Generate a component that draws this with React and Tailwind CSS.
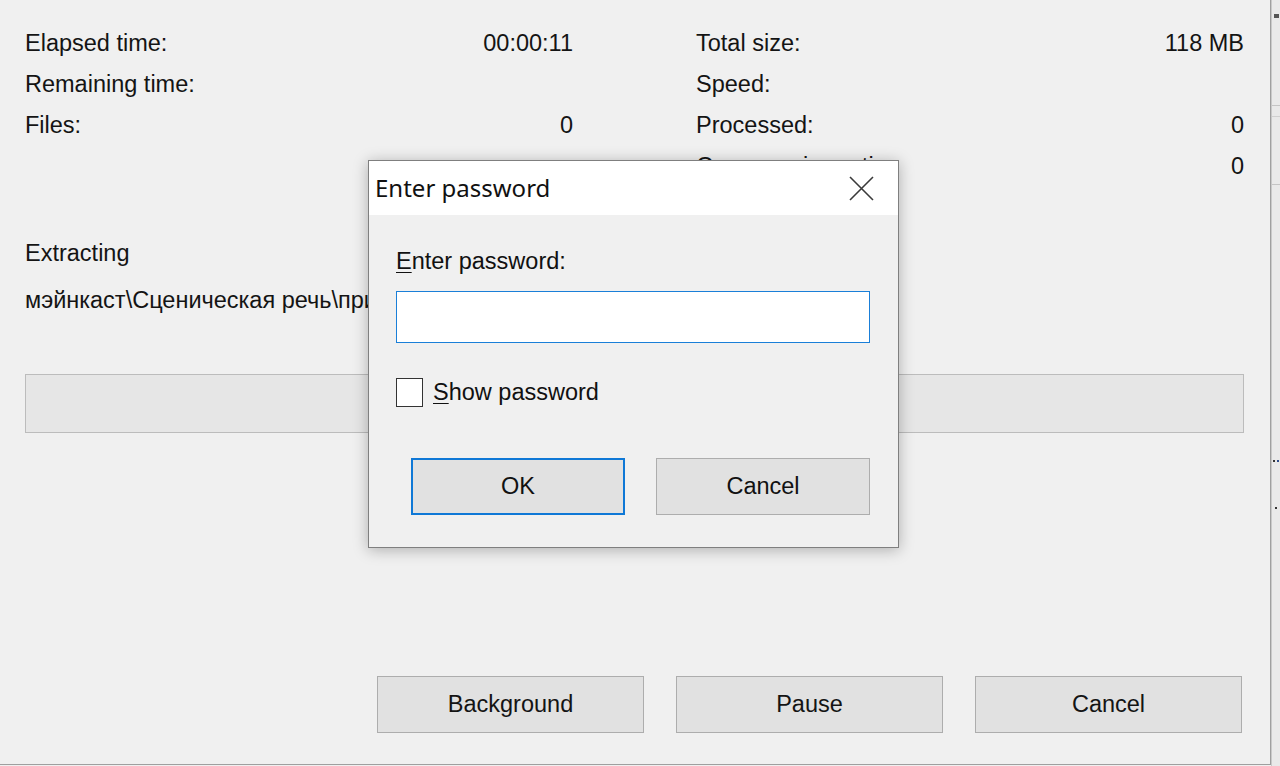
import { useState } from "react";

const font = "font-['Liberation_Sans',Arial,sans-serif]";

const rows = [
  ["Elapsed time:", "00:00:11", "Total size:", "118 MB"],
  ["Remaining time:", "", "Speed:", ""],
  ["Files:", "0", "Processed:", "0"],
  ["", "", "Compression ratio:", "0"],
];

// PASSWORD DIALOG

const PasswordDialog = () => {
  const [show, setShow] = useState(false);

  return (
    <div className="absolute left-[368px] top-[160px] w-[531px] h-[388px] border border-[#7f7f7f] bg-[#f0f0f0] shadow-[0_2px_14px_rgba(0,0,0,0.28)] flex flex-col">
      {/* TITLE */}
      <div className="h-[54px] bg-white flex items-center justify-between pl-[6px] pr-[24px]">
        <span className="font-['Noto_Sans',sans-serif] text-[24px] text-[#111] leading-none">
          Enter password
        </span>
        <svg width="25" height="25" viewBox="0 0 25 25">
          <path d="M1 1 L24 24 M24 1 L1 24" stroke="#3a3a3a" strokeWidth="1.6" fill="none" />
        </svg>
      </div>

      {/* BODY */}
      <div className={`flex flex-col pl-[27px] pr-[27px] pt-[31px] ${font} text-[23.5px] text-[#111]`}>
        <div className="h-[30px] leading-[30px]">
          <span className="underline underline-offset-[3px] decoration-1">E</span>
          nter password:
        </div>

        <input
          type={show ? "text" : "password"}
          className="mt-[15px] w-[474px] h-[52px] bg-white border-[1.5px] border-[#1a7fd8] outline-none px-2"
        />

        <label className="mt-[35px] flex items-center gap-[10px] h-[29px]">
          <input
            type="checkbox"
            checked={show}
            onChange={(e) => setShow(e.target.checked)}
            className="appearance-none w-[27px] h-[29px] bg-white border border-[#333] m-0"
          />
          <span className="leading-[29px]">
            <span className="underline underline-offset-[3px] decoration-1">S</span>
            how password
          </span>
        </label>

        <div className="mt-[51px] flex gap-[31px] pl-[15px]">
          <button className="w-[214px] h-[57px] bg-[#e1e1e1] border-2 border-[#0f78d6] text-[23.5px]">
            OK
          </button>
          <button className="w-[214px] h-[57px] bg-[#e1e1e1] border border-[#adadad] text-[23.5px]">
            Cancel
          </button>
        </div>
      </div>
    </div>
  );
};

const App = () => {
  return (
    <div className="w-[1280px] h-[766px] flex bg-[#f0f0f0] overflow-hidden">
      {/* MAIN WINDOW */}
      <div className={`relative w-[1271px] h-[765px] border-r border-b border-[#9f9f9f] bg-[#f0f0f0] flex flex-col pl-[25px] ${font} text-[23.5px] text-[#141414]`}>
        <div className="pt-[23px] grid grid-cols-[548px_548px] gap-x-[123px]">
          {rows.map((r, i) => (
            <div key={i} className="contents">
              <div className="h-[41px] leading-[41px] flex justify-between">
                <span>{r[0]}</span>
                <span>{r[1]}</span>
              </div>
              <div className="h-[41px] leading-[41px] flex justify-between">
                <span>{r[2]}</span>
                <span>{r[3]}</span>
              </div>
            </div>
          ))}
        </div>

        <div className="mt-[46px] h-[41px] leading-[41px]">Extracting</div>
        <div className="mt-[6px] h-[41px] leading-[41px] whitespace-nowrap">
          мэйнкаст\Сценическая речь\приложение.mp4
        </div>

        {/* PROGRESS */}
        <div className="mt-[53px] w-[1219px] h-[59px] bg-[#e6e6e6] border border-[#bcbcbc]" />

        {/* BUTTONS */}
        <div className="mt-auto mb-[31px] pr-[28px] flex justify-end gap-[32px]">
          {["Background", "Pause", "Cancel"].map((b) => (
            <button
              key={b}
              className="w-[267px] h-[57px] bg-[#e1e1e1] border border-[#adadad] text-[23.5px] text-[#141414]"
            >
              {b}
            </button>
          ))}
        </div>

        <PasswordDialog />
      </div>

      {/* WINDOW BEHIND */}
      <div className="flex-1 h-full bg-[#e9e9e9] border-l border-[#c9c9c9] flex flex-col">
        <div className="h-[14px]" />
        <div className="h-[4px] w-[5px] ml-[2px] bg-[#555]" />
        <div className="h-[87px]" />
        <div className="h-px bg-[#c4c4c4]" />
        <div className="h-[10px]" />
        <div className="h-px bg-[#d0d0d0]" />
        <div className="h-[67px]" />
        <div className="h-px bg-[#c4c4c4]" />
        <div className="h-[275px]" />
        <div className="flex gap-[2px] ml-[1px]">
          <div className="w-[2px] h-[2px] bg-[#333]" />
          <div className="w-[2px] h-[2px] bg-[#2b4a8a]" />
        </div>
        <div className="h-[45px]" />
        <div className="w-[2px] h-[2px] ml-[3px] bg-[#333]" />
      </div>
    </div>
  );
};

export default App;
